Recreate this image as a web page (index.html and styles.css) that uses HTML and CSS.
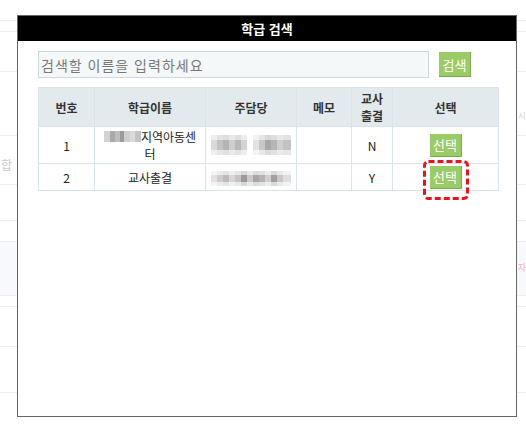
FILE: index.html
```html
<!DOCTYPE html>
<html lang="ko">
<head>
    <meta charset="UTF-8">
    <meta name="viewport" content="width=device-width, initial-scale=1.0">
    <title>학급 검색</title>
    <link rel="stylesheet" href="styles.css">
</head>
<body>
    <div class="backdrop">
        <div class="line h21"></div>
        <div class="line h11"></div>
        <div class="line h40"></div>
        <div class="line h64"><span class="ghost-right">시</span></div>
        <div class="line h49"><span class="ghost-left">합</span></div>
        <div class="line h36"></div>
        <div class="line h21"></div>
        <div class="line h54 tinted"><span class="ghost-pink">자</span></div>
        <div class="line h11"></div>
        <div class="line h40"></div>
        <div class="line h46"></div>
    </div>

    <div class="modal">
        <div class="modal-head">학급 검색</div>
        <div class="modal-body">
            <div class="search-row">
                <input type="text" class="search-input" placeholder="검색할 이름을 입력하세요">
                <button class="btn-green btn-search">검색</button>
            </div>

            <table class="result-table">
                <colgroup>
                    <col class="c-no">
                    <col class="c-name">
                    <col class="c-owner">
                    <col class="c-memo">
                    <col class="c-att">
                    <col class="c-sel">
                </colgroup>
                <thead>
                    <tr>
                        <th>번호</th>
                        <th>학급이름</th>
                        <th>주담당</th>
                        <th>메모</th>
                        <th>교사<br>출결</th>
                        <th>선택</th>
                    </tr>
                </thead>
                <tbody>
                    <tr class="row-tall">
                        <td>1</td>
                        <td><span class="blur blur-name"></span>지역아동센터</td>
                        <td><span class="blur blur-owner1"></span></td>
                        <td></td>
                        <td>N</td>
                        <td><button class="btn-green btn-pick">선택</button></td>
                    </tr>
                    <tr>
                        <td>2</td>
                        <td>교사출결</td>
                        <td><span class="blur blur-owner2"></span></td>
                        <td></td>
                        <td>Y</td>
                        <td class="marked">
                            <button class="btn-green btn-pick">선택</button>
                            <svg class="mark" width="46" height="40" viewBox="0 0 46 40">
                                <rect x="1.5" y="1.5" width="43" height="37" rx="4" fill="none" stroke="#e8141c" stroke-width="3" stroke-dasharray="6 3"/>
                            </svg>
                        </td>
                    </tr>
                </tbody>
            </table>
        </div>
    </div>
</body>
</html>
```

FILE: styles.css
```css
body { margin: 0; background: #fff; font-family: "Noto Sans CJK KR", "DejaVu Sans", sans-serif; position: relative; height: 424px; overflow: hidden; }

/* page behind the popup */
.line { border-bottom: 1px solid #eeeeee; position: relative; }
.h21 { height: 20px; }
.h11 { height: 10px; }
.h40 { height: 39px; }
.h64 { height: 63px; }
.h49 { height: 48px; }
.h36 { height: 35px; }
.h54 { height: 53px; }
.h46 { height: 45px; }
.tinted { background: #f8f9fc; }
.ghost-left { position: absolute; left: 1px; top: 22px; font-size: 12px; line-height: 14px; color: #c8c8c8; }
.ghost-right { position: absolute; right: 0; top: 38px; font-size: 9px; line-height: 12px; color: #d0d0d0; }
.ghost-pink { position: absolute; right: 0; top: 20px; font-size: 9px; line-height: 12px; color: #f0b0b0; }

/* popup */
.modal { position: absolute; left: 17px; top: 15px; width: 498px; height: 400px; border: 1px solid #666; background: #fff; }
.modal-head { height: 25px; line-height: 25px; background: #000; color: #fff; text-align: center; font-size: 13px; font-weight: bold; }
.modal-body { padding: 10px 18px 0 20px; }

.search-row { display: flex; align-items: center; gap: 10px; }
.search-input { width: 391px; height: 27px; box-sizing: border-box; border: 1px solid #cbd8de; background: #f4f8f9; padding: 0 2px; font-family: inherit; font-size: 14px; color: #333; outline: none; }
.search-input::placeholder { color: #777; letter-spacing: 1px; }

.btn-green { background: #99cc66; color: #fff; border: none; border-right: 1px solid #7fa85a; border-bottom: 1px solid #7fa85a; font-family: inherit; font-size: 13px; padding: 0; cursor: pointer; }
.btn-search { width: 32px; height: 25px; }
.btn-pick { width: 32px; height: 23px; vertical-align: middle; }

.result-table { margin-top: 9px; width: 460px; table-layout: fixed; border-collapse: collapse; font-size: 12px; color: #222; }
.c-no { width: 56px; }
.c-name { width: 111px; }
.c-owner { width: 91px; }
.c-memo { width: 55px; }
.c-att { width: 41px; }
.c-sel { width: 106px; }
.result-table th, .result-table td { border: 1px solid #dae3e7; text-align: center; vertical-align: middle; line-height: 17px; }
.result-table th { background: #e2eaee; color: #333; font-weight: bold; height: 38px; padding: 0 2px; }
.result-table td { height: 26px; padding: 0 4px; }
.result-table .row-tall td { height: 36px; }

.marked { position: relative; }
.mark { position: absolute; left: 30px; top: -4px; }

/* censored spots */
.blur { display: inline-block; vertical-align: middle; }
.blur-name { width: 37px; height: 11px; margin-top: -4px; background: linear-gradient(90deg, #d2d2d2 0 6px, #a9a9a9 6px 11px, #bdbdbd 11px 16px, #9b9b9b 16px 20px, #cfcfcf 20px 26px, #dadada 26px 31px, #c4c4c4 31px 37px); }
.blur-owner1 { width: 80px; height: 20px; background:
    linear-gradient(180deg, rgba(255,255,255,0.55) 0 5px, rgba(255,255,255,0) 5px 15px, rgba(255,255,255,0.6) 15px 20px),
    linear-gradient(90deg, #d9d9d9 0 6px, #c2c2c2 6px 12px, #b4b4b4 12px 18px, #cdcdcd 18px 24px, #b8b8b8 24px 30px, #d4d4d4 30px 36px, #fff 36px 42px, #e2e2e2 42px 48px, #c8c8c8 48px 54px, #a8a8a8 54px 60px, #b6b6b6 60px 66px, #cfcfcf 66px 72px, #c2c2c2 72px 80px); }
.blur-owner2 { width: 80px; height: 15px; background:
    linear-gradient(180deg, rgba(255,255,255,0.6) 0 4px, rgba(255,255,255,0) 4px 11px, rgba(255,255,255,0.6) 11px 15px),
    linear-gradient(90deg, #e3e3e3 0 6px, #cdcdcd 6px 12px, #bcbcbc 12px 18px, #d6d6d6 18px 24px, #c4c4c4 24px 30px, #9a9a9a 30px 36px, #c9c9c9 36px 42px, #a6a6a6 42px 48px, #b4b4b4 48px 54px, #cfcfcf 54px 60px, #a0a0a0 60px 66px, #c8c8c8 66px 72px, #dedede 72px 80px); }
```
